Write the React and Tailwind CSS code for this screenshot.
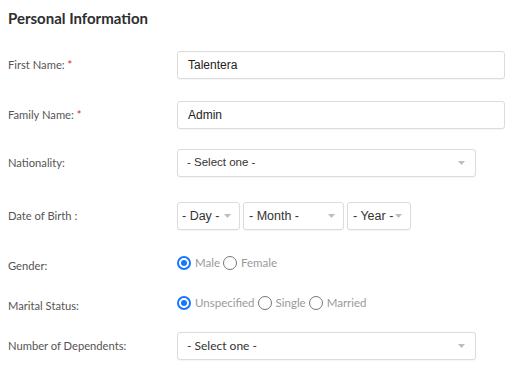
import React from 'react';

const Arrow = () => (
  <svg width="7" height="4" viewBox="0 0 7 4" className="shrink-0">
    <path d="M0 0h7L3.5 4z" fill="#bdbdbd" />
  </svg>
);

const Label = ({ children, required, className = '' }) => (
  <div className={`w-[169px] shrink-0 text-[11.2px] leading-4 text-[#555] ${className}`}>
    {children}
    {required && <span className="ml-[3px] text-[#e02020]">*</span>}
  </div>
);

const TextBox = ({ value }) => (
  <div className="flex h-[28px] w-[328px] items-center rounded-[3px] border border-[#dcdcdc] bg-white pl-[10px] font-['Liberation_Sans',Arial,sans-serif] text-[12px] text-[#222] shadow-[0_1px_1px_rgba(0,0,0,0.04)]">
    {value}
  </div>
);

const SelectBox = ({ text, width, pad = 'pl-[9px] pr-[10px]', font = "font-['Liberation_Sans',Arial,sans-serif] text-[11.5px]" }) => (
  <div className={`flex h-[28px] items-center justify-between rounded-[3px] border border-[#dcdcdc] bg-white ${pad} ${font} text-[#333] shadow-[0_1px_1px_rgba(0,0,0,0.04)] ${width}`}>
    <span>{text}</span>
    <Arrow />
  </div>
);

const Radio = ({ checked, label }) => (
  <label className="flex items-center gap-[4px]">
    {checked ? (
      <span className="flex h-[14px] w-[14px] items-center justify-center rounded-full border-2 border-[#1677ff] bg-white">
        <span className="h-[6px] w-[6px] rounded-full bg-[#1677ff]"></span>
      </span>
    ) : (
      <span className="h-[14px] w-[14px] rounded-full border border-[#777] bg-white"></span>
    )}
    <span className="text-[11.5px] text-[#9a9a9a]">{label}</span>
  </label>
);

export default function App() {
  return (
    <div className="h-[372px] w-[516px] overflow-hidden bg-white pl-[8px] font-['Lato','Open_Sans',sans-serif]">
      <h2 className="pt-[9px] text-[15px] font-bold leading-[18px] text-[#2e2e2e]">Personal Information</h2>

      <div className="mt-[24px] flex items-center">
        <Label required>First Name:</Label>
        <TextBox value="Talentera" />
      </div>

      <div className="mt-[22px] flex items-center">
        <Label required>Family Name:</Label>
        <TextBox value="Admin" />
      </div>

      <div className="mt-[20px] flex items-center">
        <Label>Nationality:</Label>
        <SelectBox text="- Select one -" width="w-[299px]" />
      </div>

      <div className="mt-[25px] flex items-center">
        <Label>Date of Birth :</Label>
        <div className="flex gap-[3px]">
          <SelectBox text="- Day -" width="w-[63px]" pad="pl-[4px] pr-[8px]" font="font-['Liberation_Sans',Arial,sans-serif] text-[12.5px]" />
          <SelectBox text="- Month -" width="w-[101px]" pad="pl-[5px] pr-[8px]" font="font-['Liberation_Sans',Arial,sans-serif] text-[12.5px]" />
          <SelectBox text="- Year -" width="w-[64px]" pad="pl-[5px] pr-[8px]" font="font-['Liberation_Sans',Arial,sans-serif] text-[12.5px]" />
        </div>
      </div>

      <div className="mt-[24px] flex items-start">
        <Label className="mt-[4px]">Gender:</Label>
        <div className="flex items-center gap-[3px]">
          <Radio checked label="Male" />
          <Radio label="Female" />
        </div>
      </div>

      <div className="mt-[20px] flex items-start">
        <Label className="mt-[4px]">Marital Status:</Label>
        <div className="flex items-center gap-[3px]">
          <Radio checked label="Unspecified" />
          <Radio label="Single" />
          <Radio label="Married" />
        </div>
      </div>

      <div className="mt-[18px] flex items-center">
        <Label>Number of Dependents:</Label>
        <SelectBox text="- Select one -" width="w-[299px]" font="text-[12px]" />
      </div>
    </div>
  );
}
